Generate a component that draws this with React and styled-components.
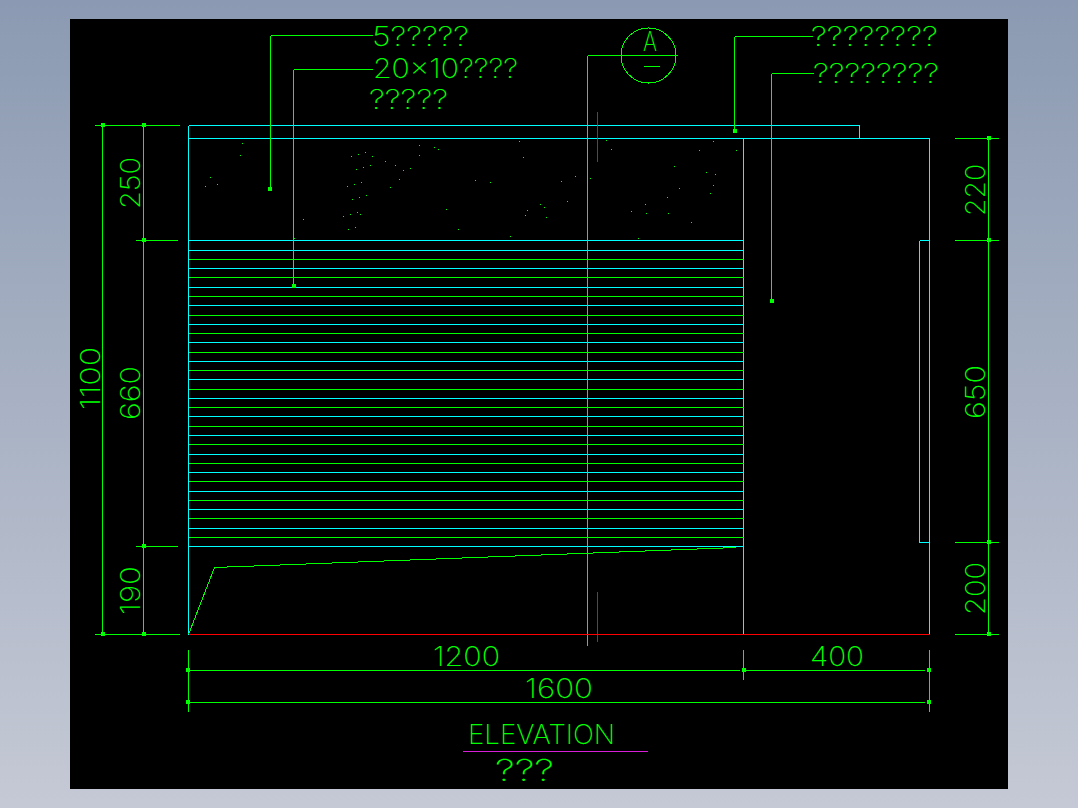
import { styled, createGlobalStyle } from "styled-components";

const GREEN = "#00ff00";
const CYAN = "#00ffff";
const RED = "#ff0000";
const MAGENTA = "#d81ed8";

const GlobalStyle = createGlobalStyle`
  html, body {
    margin: 0;
    padding: 0;
  }
`;

const Page = styled.div`
  box-sizing: border-box;
  height: 808px;
  padding: 19px 70px;
  background: linear-gradient(to bottom, #8b9ab2, #c5c9d5);
`;

const Canvas = styled.div`
  width: 938px;
  height: 770px;
  background-color: #000000;
`;

const Drawing = styled.svg`
  display: block;
  width: 938px;
  height: 770px;
  shape-rendering: crispEdges;
`;

const Wire = styled.path`
  fill: none;
  stroke: ${(props) => props.$color};
  stroke-width: 1px;
`;

const Ring = styled.circle`
  fill: none;
  stroke: ${GREEN};
  stroke-width: 1px;
`;

const Dot = styled.rect`
  fill: ${GREEN};
`;

const Label = styled.text`
  fill: ${GREEN};
  font-family: "Inter", "Liberation Sans", sans-serif;
  font-weight: 200;
  font-size: ${(props) => props.$size || 27}px;
`;

const cyanRows = [
  240, 250, 268, 287, 305, 324, 342, 361, 379, 398, 416, 435, 454, 472, 491,
  509, 528, 546,
];
const greenRows = [
  259, 277, 296, 315, 333, 352, 370, 389, 407, 426, 444, 463, 481, 500, 518,
  537,
];

const seg = (x1, y1, x2, y2) =>
  `M${x1 + 0.5} ${y1 + 0.5}L${x2 + 0.5} ${y2 + 0.5}`;

const cyanPath =
  cyanRows.map((y) => seg(188, y, 743, y)).join("") +
  seg(188, 125, 188, 634) +
  seg(188, 125, 859, 125) +
  seg(859, 125, 859, 138) +
  seg(188, 138, 929, 138) +
  seg(929, 138, 929, 634) +
  seg(743, 138, 743, 634) +
  seg(929, 240, 919, 240) +
  seg(919, 240, 919, 542) +
  seg(919, 542, 929, 542);

const greenPath =
  greenRows.map((y) => seg(188, y, 743, y)).join("") +
  // leaders
  seg(372, 35, 270, 35) +
  seg(270, 35, 270, 189) +
  seg(372, 69, 293, 69) +
  seg(293, 69, 293, 286) +
  seg(812, 36, 734, 36) +
  seg(734, 36, 734, 131) +
  seg(813, 73, 771, 73) +
  seg(771, 73, 771, 301) +
  // section mark
  seg(677, 55, 587, 55) +
  seg(587, 55, 587, 645) +
  seg(643, 66, 659, 66) +
  // left dimensions
  seg(94, 125, 179, 125) +
  seg(94, 634, 179, 634) +
  seg(135, 240, 177, 240) +
  seg(135, 546, 177, 546) +
  seg(102, 125, 102, 634) +
  seg(143, 125, 143, 634) +
  // right dimensions
  seg(954, 138, 998, 138) +
  seg(954, 240, 998, 240) +
  seg(954, 542, 998, 542) +
  seg(954, 634, 998, 634) +
  seg(988, 138, 988, 634) +
  // bottom dimensions
  seg(188, 649, 188, 711) +
  seg(743, 649, 743, 679) +
  seg(929, 649, 929, 711) +
  seg(188, 670, 739, 670) +
  seg(745, 670, 924, 670) +
  seg(188, 702, 924, 702) +
  // ramp
  seg(188, 634, 214, 567) +
  seg(214, 567, 736, 547);

const redPath =
  seg(188, 634, 929, 634) + seg(597, 111, 597, 161) + seg(597, 591, 597, 641);

const handles = [
  [270, 189], [294, 286], [735, 131], [772, 301],
  [103, 125], [144, 125], [144, 240], [144, 546], [103, 634], [144, 634],
  [989, 138], [989, 240], [989, 542], [989, 634],
  [188, 670], [188, 702], [744, 670], [929, 670], [929, 702],
];

// hatch specks, read off the stone band
const speckLeft = [
  [157, 40], [151, 76], [61, 142], [46, 169], [82, 163], [340, 268], [313, 325],
  [688, 46], [733, 52], [745, 58], [688, 76], [484, 79], [505, 73], [526, 67],
  [547, 79], [586, 94], [616, 106], [541, 106], [520, 112], [499, 118],
  [640, 121], [661, 115], [628, 148], [514, 157], [493, 163], [472, 169],
  [601, 172], [529, 196], [508, 202], [487, 208], [769, 238], [502, 247],
  [481, 253], [511, 253], [460, 259], [496, 292], [475, 298], [805, 298],
];
const speckRight = [
  [148, 34], [160, 82], [16, 151], [61, 157], [316, 139], [274, 154], [361, 145],
  [409, 31], [424, 58], [688, 61], [730, 34], [799, 61], [613, 109], [709, 127],
  [736, 133], [730, 166], [721, 190], [628, 175], [592, 202], [526, 223],
  [484, 244], [529, 250], [595, 250], [664, 277], [505, 325], [211, 223],
  [223, 232], [172, 241], [166, 256], [229, 262], [292, 214], [121, 319],
];
const specks = [
  ...speckLeft.map(([x, y]) => [190 + Math.floor(x / 3), 130 + Math.floor(y / 3)]),
  ...speckRight.map(([x, y]) => [470 + Math.floor(x / 3), 130 + Math.floor(y / 3)]),
];

const texts = [
  { t: "5?????", x: 372, y: 46, w: 97 },
  { t: "20x10????", x: 373, y: 78, w: 145 },
  { t: "?????", x: 369, y: 109, w: 79 },
  { t: "????????", x: 811, y: 46, w: 127 },
  { t: "????????", x: 813, y: 83, w: 126 },
  { t: "A", x: 643, y: 51, w: 14 },
  { t: "1200", x: 433, y: 666, w: 67 },
  { t: "400", x: 810, y: 666, w: 54 },
  { t: "1600", x: 525, y: 698, w: 68 },
  { t: "ELEVATION", x: 468, y: 744, w: 147 },
  { t: "???", x: 495, y: 781, w: 59, size: 30 },
];

const sideTexts = [
  { t: "250", x: 140, y: 209, w: 52 },
  { t: "660", x: 140, y: 420, w: 54 },
  { t: "190", x: 140, y: 615, w: 49 },
  { t: "1100", x: 100, y: 410, w: 63 },
  { t: "220", x: 985, y: 216, w: 52 },
  { t: "650", x: 985, y: 419, w: 54 },
  { t: "200", x: 985, y: 615, w: 53 },
];

function App() {
  return (
    <Page>
      <GlobalStyle />
      <Canvas>
        <Drawing viewBox="70 19 938 770">
          <Wire $color={CYAN} d={cyanPath} />
          <Wire $color={GREEN} d={greenPath} />
          <Wire $color={RED} d={redPath} />
          <Wire $color={MAGENTA} d={seg(462, 751, 647, 751)} />
          <Ring cx="648.5" cy="55.5" r="27.5" />

          {specks.map(([x, y]) => (
            <Dot key={`${x}-${y}`} x={x} y={y} width="1" height="1" />
          ))}
          {handles.map(([x, y]) => (
            <Dot key={`${x}:${y}`} x={x - 2} y={y - 2} width="4" height="4" />
          ))}

          {texts.map((item) => (
            <Label
              key={`${item.t}-${item.x}`}
              x={item.x}
              y={item.y}
              $size={item.size}
              textLength={item.w}
              lengthAdjust="spacingAndGlyphs"
            >
              {item.t}
            </Label>
          ))}
          {sideTexts.map((item) => (
            <Label
              key={`${item.t}-${item.y}`}
              transform={`translate(${item.x} ${item.y}) rotate(-90)`}
              textLength={item.w}
              lengthAdjust="spacingAndGlyphs"
            >
              {item.t}
            </Label>
          ))}
        </Drawing>
      </Canvas>
    </Page>
  );
}

export default App;
